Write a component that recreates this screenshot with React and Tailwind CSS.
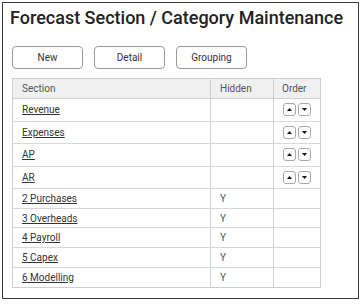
import React from "react";

const sections = [
  { name: "Revenue", hidden: "", order: true },
  { name: "Expenses", hidden: "", order: true },
  { name: "AP", hidden: "", order: true },
  { name: "AR", hidden: "", order: true },
  { name: "2 Purchases", hidden: "Y", order: false },
  { name: "3 Overheads", hidden: "Y", order: false },
  { name: "4 Payroll", hidden: "Y", order: false },
  { name: "5 Capex", hidden: "Y", order: false },
  { name: "6 Modelling", hidden: "Y", order: false },
];

function OrderButton({ up }) {
  return (
    <button className="w-[13px] h-[13px] flex items-center justify-center rounded-[3px] border border-[#a8a8a8] bg-white">
      <svg width="5" height="3" viewBox="0 0 5 3">
        {up ? <polygon points="0,3 5,3 2.5,0" fill="#111" /> : <polygon points="0,0 5,0 2.5,3" fill="#111" />}
      </svg>
    </button>
  );
}

export default function App() {
  return (
    <div className="w-[361px] h-[304px] bg-white pt-[2px] pl-[2px] font-['Roboto',sans-serif]">
      <div className="w-[357px] h-[297px] border border-[#3a3a3a]">
        <h1 className="mt-[3px] ml-[7px] whitespace-nowrap text-[18px] leading-[24px] font-medium text-[#222]">
          Forecast Section / Category Maintenance
        </h1>

        {/* actions */}
        <div className="flex gap-[11px] ml-[9px] mt-[16px]">
          {["New", "Detail", "Grouping"].map((b) => (
            <button key={b}
              className="w-[71px] h-[23px] rounded-[4px] border border-[#9a9a9a] bg-white text-[10px] text-[#333]">
              {b}
            </button>
          ))}
        </div>

        {/* grid */}
        <div className="ml-[9px] mt-[9px] w-[309px] border border-[#cfcfcf] text-[10px] text-[#444]">
          <div className="grid grid-cols-[197px_63px_47px] h-[20px] bg-[#f0f0f0] border-b border-[#cfcfcf] text-[#555]">
            <div className="flex items-center pl-[9px]">Section</div>
            <div className="flex items-center pl-[9px] border-l border-[#cfcfcf]">Hidden</div>
            <div className="flex items-center pl-[8px] border-l border-[#cfcfcf]">Order</div>
          </div>
          {sections.map((s, i) => (
            <div key={s.name}
              className={`grid grid-cols-[197px_63px_47px] ${s.order ? "h-[22.5px]" : "h-[19.7px]"} ${i < sections.length - 1 ? "border-b" : ""} border-[#d8d8d8]`}>
              <div className="flex items-center pl-[9px]">
                <a href="#" className="underline text-[#333] underline-offset-[1px]">{s.name}</a>
              </div>
              <div className="flex items-center pl-[9px] border-l border-[#cfcfcf] text-[#555]">{s.hidden}</div>
              <div className="flex items-center pl-[9px] gap-[2px] border-l border-[#cfcfcf]">
                {s.order && (<><OrderButton up /><OrderButton /></>)}
              </div>
            </div>
          ))}
        </div>
      </div>
    </div>
  );
}
